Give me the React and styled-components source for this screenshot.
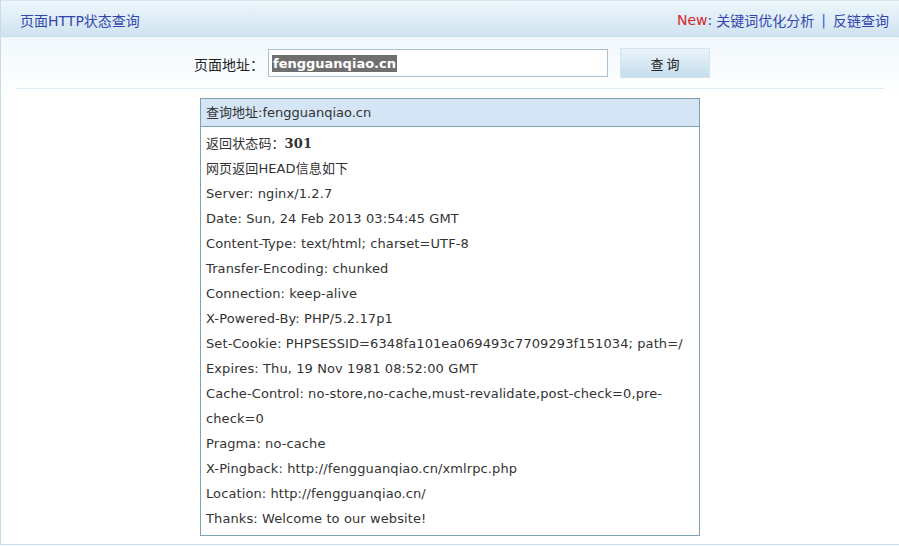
import React from "react";
import styled, { createGlobalStyle } from "styled-components";

const GlobalStyle = createGlobalStyle`
  html, body {
    margin: 0;
    padding: 0;
    background: #fff;
  }
  body {
    font-family: "DejaVu Sans", Verdana, "Noto Sans CJK SC", sans-serif;
    font-size: 13px;
    color: #333;
  }
`;

const headers = [
  "Server: nginx/1.2.7",
  "Date: Sun, 24 Feb 2013 03:54:45 GMT",
  "Content-Type: text/html; charset=UTF-8",
  "Transfer-Encoding: chunked",
  "Connection: keep-alive",
  "X-Powered-By: PHP/5.2.17p1",
  "Set-Cookie: PHPSESSID=6348fa101ea069493c7709293f151034; path=/",
  "Expires: Thu, 19 Nov 1981 08:52:00 GMT",
  "Cache-Control: no-store,no-cache,must-revalidate,post-check=0,pre-check=0",
  "Pragma: no-cache",
  "X-Pingback: http://fengguanqiao.cn/xmlrpc.php",
  "Location: http://fengguanqiao.cn/",
  "Thanks: Welcome to our website!",
];

const App = () => {
  return (
    <>
      <GlobalStyle />
      <Page>
        <TopBar>
          <Title>页面HTTP状态查询</Title>
          <Links>
            <NewTag>New</NewTag>
            <Colon>:</Colon>
            <LinkItem href="#">关键词优化分析</LinkItem>
            <Sep>|</Sep>
            <LinkItem href="#">反链查询</LinkItem>
          </Links>
        </TopBar>
        <Body>
          <SearchRow>
            <Label>页面地址：</Label>
            <InputBox>
              <Selected>fengguanqiao.cn</Selected>
            </InputBox>
            <QueryButton>查 询</QueryButton>
          </SearchRow>
          <Divider />
          <ResultBox>
            <ResultHead>查询地址:fengguanqiao.cn</ResultHead>
            <ResultBody>
              <Line>
                返回状态码：<Code>301</Code>
              </Line>
              <Line>网页返回HEAD信息如下</Line>
              {headers.map((h) => (
                <Line key={h}>{h}</Line>
              ))}
            </ResultBody>
          </ResultBox>
        </Body>
      </Page>
    </>
  );
};

const Page = styled.div`
  width: 899px;
  height: 545px;
  box-sizing: border-box;
  border-left: 1px solid #c5dcea;
  border-top: 1px solid #d6e6f0;
  border-bottom: 1px solid #c5dcea;
  overflow: hidden;
`;

const TopBar = styled.div`
  height: 36px;
  box-sizing: border-box;
  padding: 2px 10px 0 19px;
  display: flex;
  align-items: center;
  justify-content: space-between;
  background: linear-gradient(#eef6fb, #d0e4f1);
  border-bottom: 1px solid #c9dfec;
`;

const Title = styled.div`
  font-family: "DejaVu Sans", "Noto Sans CJK SC", sans-serif;
  font-size: 14px;
  color: #3346ad;
`;

const Links = styled.div`
  display: flex;
  align-items: center;
  font-size: 14px;
  font-family: "DejaVu Sans", "Noto Sans CJK SC", sans-serif;
`;

const NewTag = styled.span`
  color: #d9262c;
`;

const Colon = styled.span`
  color: #3346ad;
  margin-right: 4px;
`;

const LinkItem = styled.a`
  color: #3346ad;
  text-decoration: none;
`;

const Sep = styled.span`
  color: #3a5fc8;
  margin: 0 7px;
`;

const Body = styled.div`
  background: linear-gradient(#f1f8fc 0, #ffffff 60px);
  padding-top: 11px;
`;

const SearchRow = styled.div`
  display: flex;
  align-items: center;
  justify-content: center;
  height: 30px;
  padding-left: 4px;
`;

const Label = styled.span`
  font-family: "Noto Sans CJK SC", sans-serif;
  font-size: 14px;
  color: #222;
  margin-right: 4px;
  margin-top: 2px;
`;

const InputBox = styled.div`
  width: 340px;
  height: 28px;
  box-sizing: border-box;
  border: 1px solid #a7c3d3;
  background: #fff;
  display: flex;
  align-items: center;
  padding-left: 3px;
`;

const Selected = styled.span`
  background: #6f6f6f;
  color: #fff;
  font-family: "DejaVu Sans", sans-serif;
  font-weight: bold;
  font-size: 13px;
  line-height: 17px;
  padding: 0 1px;
`;

const QueryButton = styled.button`
  width: 90px;
  height: 30px;
  margin-left: 12px;
  border: 1px solid #d5e5ef;
  background: linear-gradient(#e9f3f9, #c6deed);
  font-family: "Noto Sans CJK SC", sans-serif;
  font-size: 13px;
  color: #222;
  cursor: pointer;
`;

const Divider = styled.div`
  height: 1px;
  margin: 10px 15px 0 15px;
  background: #dcebf2;
`;

const ResultBox = styled.div`
  width: 500px;
  margin: 9px 0 0 199px;
  border: 1px solid #7ca1b2;
  box-sizing: border-box;
`;

const ResultHead = styled.div`
  height: 27px;
  line-height: 27px;
  padding-left: 5px;
  background: #d4e5f6;
  border-bottom: 1px solid #7ca1b2;
  color: #333;
`;

const ResultBody = styled.div`
  padding: 4px 6px 4px 5px;
  letter-spacing: 0.1px;
`;

const Line = styled.div`
  line-height: 25px;
`;

const Code = styled.b`
  font-family: "DejaVu Serif", Georgia, serif;
`;

export default App;
